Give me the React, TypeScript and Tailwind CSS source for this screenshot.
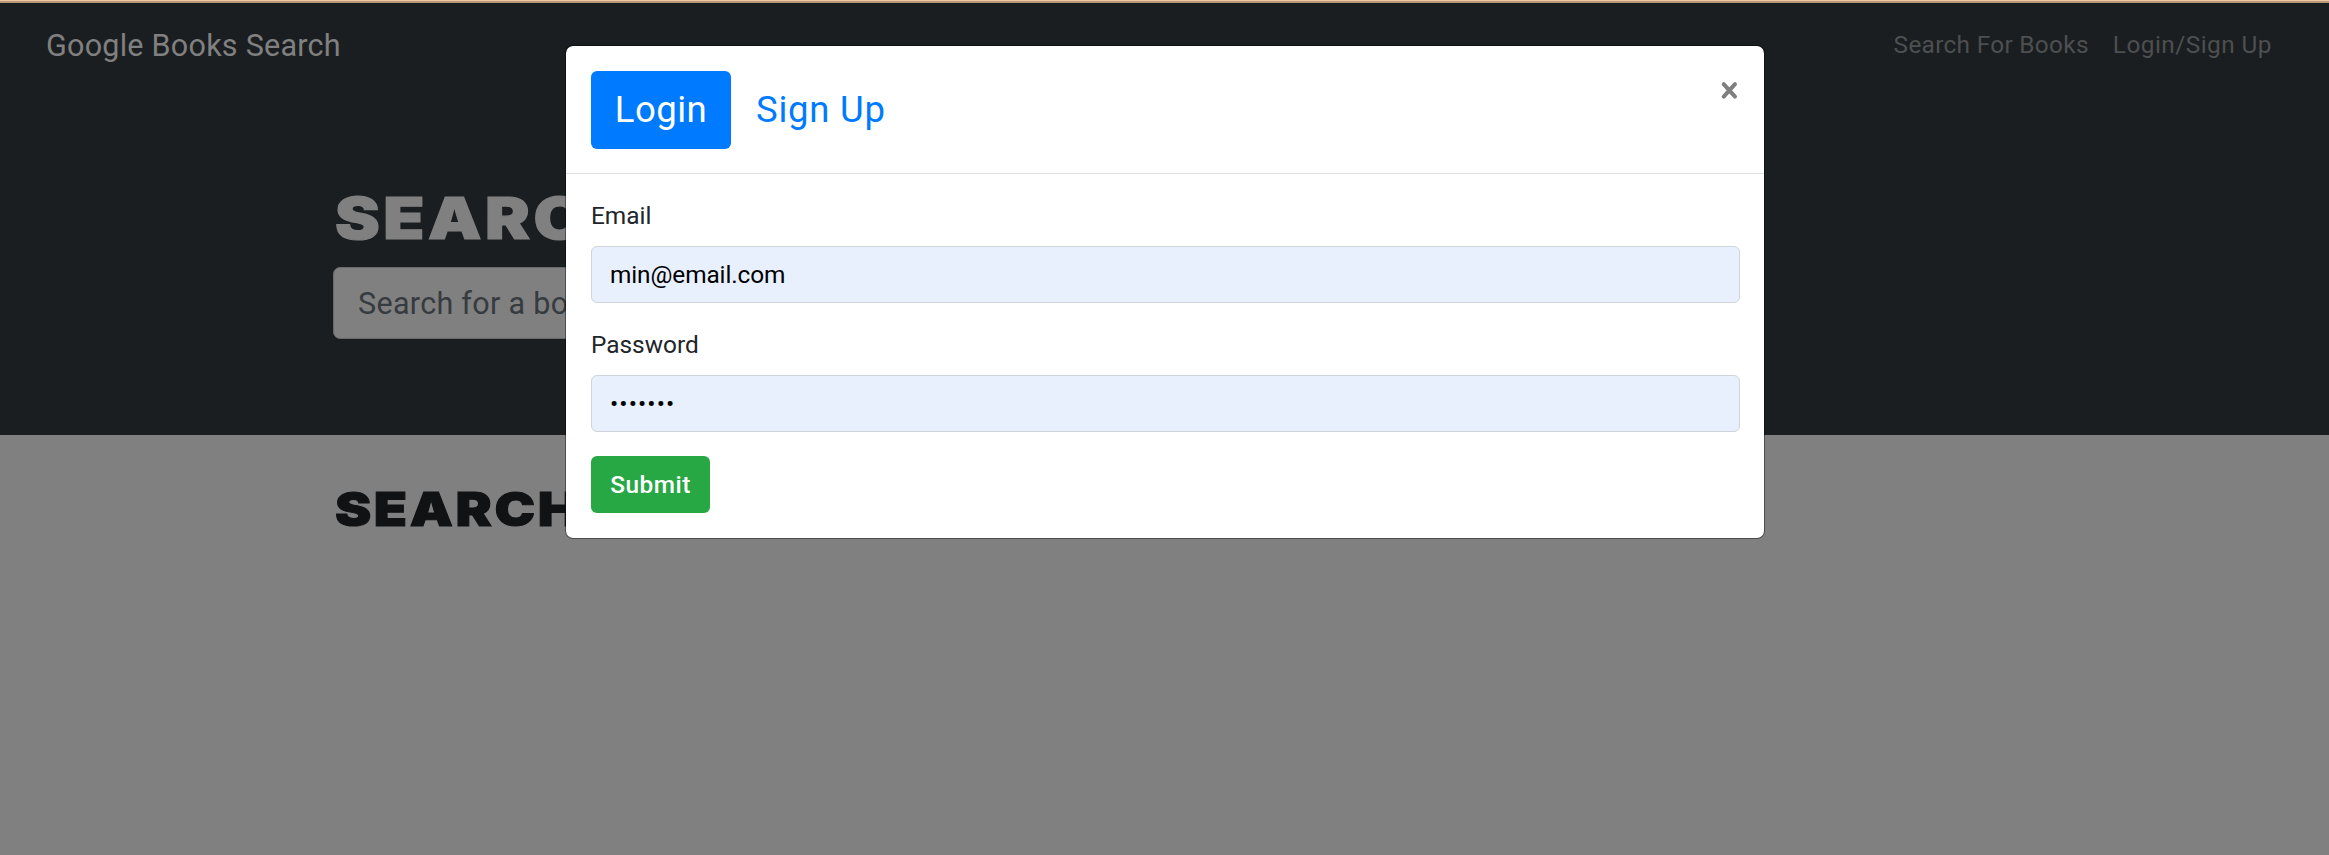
import React from "react";

function Field({ label, children }: { label: string; children: React.ReactNode }) {
  return (
    <div className="flex flex-col">
      <label className="h-[49px] text-[24.4px] leading-[37px] text-[#212529]">{label}</label>
      <div className="flex h-[57px] items-center rounded-[6px] border border-[#ced4da] bg-[#e8f0fe] pl-[18px] text-[24.4px] leading-[55px] text-black">
        {children}
      </div>
    </div>
  );
}

function LoginModal() {
  return (
    <div
      role="dialog"
      className="absolute left-[565px] top-[45px] flex h-[494px] w-[1200px] flex-col rounded-[8px] border border-black/40 bg-white bg-clip-padding"
    >
      <header className="flex h-[128px] shrink-0 items-start justify-between border-b border-[#dee2e6] pl-[25px] pr-[25px] pt-[25px]">
        <nav className="flex text-[36.5px] leading-[78px]">
          <a className="flex h-[78px] w-[140px] justify-center rounded-[6px] bg-[#007bff] text-white">
            <span className="tracking-[0.5px]">Login</span>
          </a>
          <a className="flex h-[78px] pl-[25px] text-[#007bff]">
            <span className="tracking-[0.75px]">Sign Up</span>
          </a>
        </nav>
        <button aria-label="Close" className="mt-[10px]">
          <svg width="19" height="19" viewBox="0 0 19 19" fill="none" stroke="#7f7f7f" strokeWidth="4" strokeLinecap="round">
            <path d="M3.7 3.2 15 15.6M15 3.2 3.7 15.6" />
          </svg>
        </button>
      </header>
      <form className="flex flex-col pl-[25px] pr-[24px] pt-[23px]">
        <Field label="Email">
          <span className="tracking-[-0.1px]">min@email.com</span>
        </Field>
        <div className="h-[23px]" />
        <Field label="Password">
          <span className="tracking-[1.1px]">•••••••</span>
        </Field>
        <button
          type="button"
          className="mt-6 h-[57px] w-[119px] rounded-[6px] bg-[#28a745] text-[24.4px] font-medium leading-[57px] tracking-[0.5px] text-white"
        >
          Submit
        </button>
      </form>
    </div>
  );
}

export default function App() {
  return (
    <div className="relative flex h-[855px] w-full flex-col overflow-hidden bg-[#808080] font-['Roboto','Liberation_Sans',sans-serif]">
      <div className="h-px shrink-0 bg-[#f0c8a0]" />
      <div className="h-[2px] shrink-0 bg-[#b89878]" />
      <div className="flex h-[432px] shrink-0 flex-col bg-[#1a1e20]">
        <nav className="flex h-[84px] items-start justify-between pl-[46px] pr-[57px] pt-[18px]">
          <span className="text-[30.5px] leading-[49px] tracking-[0.25px] text-[#808080]">Google Books Search</span>
          <div className="flex gap-[24px] text-[24.4px] leading-[48px] text-[#4d4f50]">
            <span className="tracking-[0.3px]">Search For Books</span>
            <span className="tracking-[0.45px]">Login/Sign Up</span>
          </div>
        </nav>
        <main className="flex flex-col pl-[333px]">
          <h1 className="ml-[2px] mt-[101px] h-[79px] origin-left scale-x-[1.17] font-['Inter'] text-[57.5px] font-black leading-[60px] tracking-[3px] text-[#808080] [-webkit-text-stroke:1.2px_#808080]">
            SEARCH
          </h1>
          <div className="flex h-[72px] w-[900px] rounded-[7px] border border-[#67696b] bg-[#808080] pl-[24px] text-[30.5px] leading-[71px] tracking-[0.3px] text-[#363b3f]">
            Search for a book
          </div>
        </main>
      </div>
      <section className="pl-[335px] pt-[44px]">
        <h2 className="origin-left scale-x-[1.17] font-['Inter'] text-[46.5px] font-black leading-[60px] tracking-[2.2px] text-[#101214] [-webkit-text-stroke:1px_#101214]">
          SEARCH
        </h2>
      </section>
      <LoginModal />
    </div>
  );
}
